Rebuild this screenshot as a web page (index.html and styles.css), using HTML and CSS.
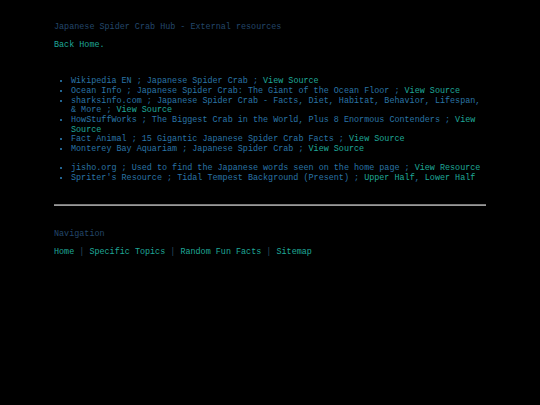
FILE: index.html
```html
<!DOCTYPE html>
<html>
<head>
<meta charset="utf-8">
<title>Japanese Spider Crab Hub - External resources</title>
<link rel="stylesheet" href="styles.css">
</head>
<body>
<div class="page">
  <p class="title">Japanese Spider Crab Hub - External resources</p>
  <p class="back"><a href="#">Back Home.</a></p>
  <ul class="sources">
    <li>Wikipedia EN ; Japanese Spider Crab ; <a href="#">View Source</a></li>
    <li>Ocean Info ; Japanese Spider Crab: The Giant of the Ocean Floor ; <a href="#">View Source</a></li>
    <li>sharksinfo.com ; Japanese Spider Crab - Facts, Diet, Habitat, Behavior, Lifespan, &amp; More ; <a href="#">View Source</a></li>
    <li>HowStuffWorks ; The Biggest Crab in the World, Plus 8 Enormous Contenders ; <a href="#">View Source</a></li>
    <li>Fact Animal ; 15 Gigantic Japanese Spider Crab Facts ; <a href="#">View Source</a></li>
    <li>Monterey Bay Aquariam ; Japanese Spider Crab ; <a href="#">View Source</a></li>
  </ul>
  <ul class="sources second">
    <li>jisho.org ; Used to find the Japanese words seen on the home page ; <a href="#">View Resource</a></li>
    <li>Spriter's Resource ; Tidal Tempest Background (Present) ; <a href="#">Upper Half</a>, <a href="#">Lower Half</a></li>
  </ul>
  <hr class="rule">
  <p class="nav-title">Navigation</p>
  <p class="nav"><a href="#">Home</a> <span class="sep">|</span> <a href="#">Specific Topics</a> <span class="sep">|</span> <a href="#">Random Fun Facts</a> <span class="sep">|</span> <a href="#">Sitemap</a></p>
</div>
</body>
</html>
```
FILE: styles.css
```css
html, body {
  margin: 0;
  padding: 0;
  background: #000;
}
body {
  font-family: "Liberation Mono", "Courier New", monospace;
  font-size: 8.44px;
  line-height: 9.7px;
  color: #2a74a6;
}
.page {
  padding: 23px 54px 20px 54px;
}
p {
  margin: 0;
}
a {
  color: #1fa898;
  text-decoration: none;
}
.title {
  color: #23476b;
}
.back {
  margin-top: 8.3px;
}
.sources {
  margin: 26.5px 0 0 0;
  padding-left: 17px;
  list-style: disc;
}
.sources li {
  line-height: 9.7px;
}
.sources li::marker {
  color: #2f86c0;
}
.sources.second {
  margin-top: 9.6px;
}
.rule {
  margin: 20px 0 0 0;
  border: 0;
  height: 2px;
  background: linear-gradient(#7a7a7a 0 1px, #9a9a9a 1px 2px);
}
.nav-title {
  margin-top: 24px;
  color: #23476b;
}
.nav {
  margin-top: 8.5px;
}
.sep {
  color: #2a4a60;
}
```
